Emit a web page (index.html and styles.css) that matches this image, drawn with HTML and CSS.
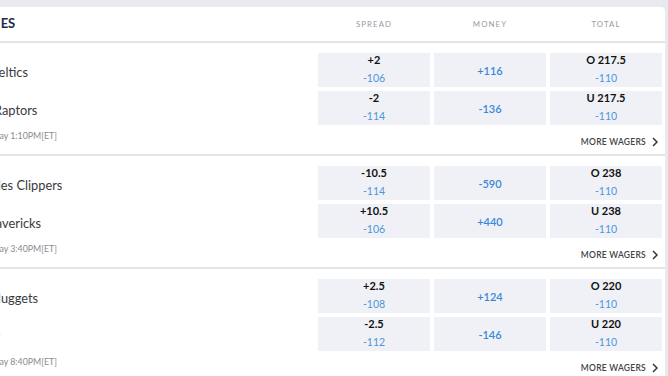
FILE: index.html
```html
<!DOCTYPE html>
<html>
<head>
<meta charset="utf-8">
<link rel="stylesheet" href="styles.css">
</head>
<body>
<div class="board">
  <div class="head">
    <div class="title">GAMES</div>
    <div class="colh">SPREAD</div>
    <div class="colh">MONEY</div>
    <div class="colh">TOTAL</div>
  </div>

  <div class="game">
    <div class="team">Boston Celtics</div>
    <div class="cell"><span class="line">+2</span><span class="odds">-106</span></div>
    <div class="cell"><span class="money">+116</span></div>
    <div class="cell"><span class="line">O 217.5</span><span class="odds">-110</span></div>
    <div class="team">Toronto Raptors</div>
    <div class="cell"><span class="line">-2</span><span class="odds">-114</span></div>
    <div class="cell"><span class="money">-136</span></div>
    <div class="cell"><span class="line">U 217.5</span><span class="odds">-110</span></div>
    <div class="time">Sunday 1:10PM[ET]</div>
    <div class="more">MORE WAGERS <svg class="chev" viewBox="0 0 6 10" width="6" height="10"><path d="M1 1 L5 5 L1 9" fill="none" stroke="#333" stroke-width="1.5"/></svg></div>
  </div>

  <div class="game">
    <div class="team">Los Angeles Clippers</div>
    <div class="cell"><span class="line">-10.5</span><span class="odds">-114</span></div>
    <div class="cell"><span class="money">-590</span></div>
    <div class="cell"><span class="line">O 238</span><span class="odds">-110</span></div>
    <div class="team">Dallas Mavericks</div>
    <div class="cell"><span class="line">+10.5</span><span class="odds">-106</span></div>
    <div class="cell"><span class="money">+440</span></div>
    <div class="cell"><span class="line">U 238</span><span class="odds">-110</span></div>
    <div class="time">Sunday 3:40PM[ET]</div>
    <div class="more">MORE WAGERS <svg class="chev" viewBox="0 0 6 10" width="6" height="10"><path d="M1 1 L5 5 L1 9" fill="none" stroke="#333" stroke-width="1.5"/></svg></div>
  </div>

  <div class="game">
    <div class="team">Denver Nuggets</div>
    <div class="cell"><span class="line">+2.5</span><span class="odds">-108</span></div>
    <div class="cell"><span class="money">+124</span></div>
    <div class="cell"><span class="line">O 220</span><span class="odds">-110</span></div>
    <div class="team">Utah Jazz</div>
    <div class="cell"><span class="line">-2.5</span><span class="odds">-112</span></div>
    <div class="cell"><span class="money">-146</span></div>
    <div class="cell"><span class="line">U 220</span><span class="odds">-110</span></div>
    <div class="time">Sunday 8:40PM[ET]</div>
    <div class="more">MORE WAGERS <svg class="chev" viewBox="0 0 6 10" width="6" height="10"><path d="M1 1 L5 5 L1 9" fill="none" stroke="#333" stroke-width="1.5"/></svg></div>
  </div>
</div>
</body>
</html>
```

FILE: styles.css
```css
html, body {
  margin: 0;
  padding: 0;
  background: #e9e9f0;
  overflow: hidden;
  height: 376px;
}
body {
  font-family: Lato, "Liberation Sans", sans-serif;
  width: 668px;
}
.board {
  margin: 7px 3px 0 -67px;
  background: #fff;
  border-radius: 4px 4px 0 0;
  padding: 0 3px 0 14px;
}
.head {
  display: grid;
  grid-template-columns: 1fr 112px 112px 112px;
  column-gap: 4px;
  height: 34px;
  align-items: center;
  border-bottom: 2px solid #e3e3e8;
  margin: 0 -3px 0 -14px;
  padding: 0 3px 0 14px;
}
.title {
  padding-left: 23px;
  padding-bottom: 3px;
  font-size: 13px;
  font-weight: 700;
  color: #1d2b4c;
}
.colh {
  text-align: center;
  font-size: 7.8px;
  letter-spacing: 1.1px;
  color: #9a9a9f;
}
.game {
  display: grid;
  grid-template-columns: 1fr 112px 112px 112px;
  grid-template-rows: 34px 34px auto;
  gap: 4px;
  padding: 10px 3px 0 14px;
  margin: 0 -3px 0 -14px;
  border-bottom: 2px solid #e3e3e8;
}
.team {
  display: flex;
  align-items: center;
  padding-top: 3px;
  font-size: 12.8px;
  color: #3a3a3d;
  white-space: nowrap;
}
.cell {
  background: #f0f1f6;
  display: flex;
  flex-direction: column;
  align-items: center;
  justify-content: center;
  padding-bottom: 2px;
  box-sizing: border-box;
}
.line {
  font-size: 11px;
  font-weight: 700;
  color: #111;
  line-height: 14px;
}
.odds {
  font-size: 10.5px;
  color: #4d95da;
  line-height: 14px;
  margin-top: 4px;
}
.money {
  font-size: 11px;
  color: #3a88d6;
  font-weight: 600;
  padding-top: 2px;
}
.time {
  padding-left: 33px;
  font-size: 8.8px;
  color: #8a8a8f;
  line-height: 12px;
  margin-top: 1px;
  padding-bottom: 12px;
}
.more {
  grid-column: 2 / 5;
  display: flex;
  align-items: center;
  justify-content: flex-end;
  gap: 6px;
  padding-right: 4px;
  font-size: 8.5px;
  font-weight: 600;
  letter-spacing: 0.25px;
  color: #444;
  line-height: 12px;
  margin-top: 1px;
}
.chev {
  display: block;
}
```
